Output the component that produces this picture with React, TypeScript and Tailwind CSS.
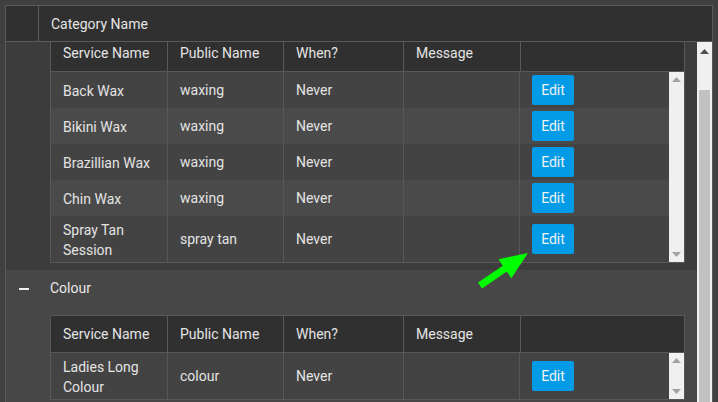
import React from "react";

type Row = { name: string[]; pub: string; when: string };

const Up = ({ color }: { color: string }) => (
  <svg width="9" height="5" viewBox="0 0 9 5"><polygon points="0,5 9,5 4.5,0" fill={color} /></svg>
);
const Down = ({ color }: { color: string }) => (
  <svg width="9" height="5" viewBox="0 0 9 5"><polygon points="0,0 9,0 4.5,5" fill={color} /></svg>
);

function Table({ rows }: { rows: Row[] }) {
  return (
    <div className="w-[635px] border border-[#585858] flex flex-col">
      <div className="flex h-[37px] bg-[#303030] border-b border-[#585858] text-[14px] text-[#e4e4e4]">
        <div className="w-[117px] shrink-0 border-r border-[#585858] px-3 pt-[1px] flex items-center">Service Name</div>
        <div className="w-[116px] shrink-0 border-r border-[#585858] px-3 pt-[1px] flex items-center">Public Name</div>
        <div className="w-[120px] shrink-0 border-r border-[#585858] px-3 pt-[1px] flex items-center">When?</div>
        <div className="w-[117px] shrink-0 border-r border-[#585858] px-3 pt-[1px] flex items-center">Message</div>
        <div className="flex-1" />
      </div>
      <div className="flex">
        <div className="flex-1 flex flex-col">
          {rows.map((r, i) => (
            <div
              key={i}
              className={`flex text-[14px] text-[#e4e4e4] ${r.name.length > 1 ? "h-[46px]" : "h-[36px]"} ${i % 2 === 0 ? "bg-[#434343]" : "bg-[#4a4a4a]"}`}
            >
              <div className="w-[117px] shrink-0 border-r border-[#585858] px-3 pt-[1px] flex flex-col justify-center leading-[20px]">
                {r.name.map((n, j) => (
                  <span key={j}>{n}</span>
                ))}
              </div>
              <div className="w-[116px] shrink-0 border-r border-[#585858] px-3 pt-[1px] flex items-center">{r.pub}</div>
              <div className="w-[120px] shrink-0 border-r border-[#585858] px-3 pt-[1px] flex items-center">{r.when}</div>
              <div className="w-[116px] shrink-0 border-r border-[#585858]" />
              <div className="flex-1 flex items-center pl-[12px]">
                <button className="w-[42px] h-[30px] bg-[#039be5] rounded-[2px] text-[14px] text-[#f2f2f2] pt-[1px] flex items-center justify-center">
                  Edit
                </button>
              </div>
            </div>
          ))}
        </div>
        <div className="w-[15px] bg-[#f0f0f0] flex flex-col items-center justify-between py-[5px]">
          <Up color="#a3a3a3" />
          <Down color="#a3a3a3" />
        </div>
      </div>
    </div>
  );
}

const waxRows: Row[] = [
  { name: ["Back Wax"], pub: "waxing", when: "Never" },
  { name: ["Bikini Wax"], pub: "waxing", when: "Never" },
  { name: ["Brazillian Wax"], pub: "waxing", when: "Never" },
  { name: ["Chin Wax"], pub: "waxing", when: "Never" },
  { name: ["Spray Tan", "Session"], pub: "spray tan", when: "Never" },
];

const colourRows: Row[] = [{ name: ["Ladies Long", "Colour"], pub: "colour", when: "Never" }];

export default function App() {
  return (
    <div
      className="relative w-[718px] h-[402px] overflow-hidden bg-[#404040]"
      style={{ fontFamily: "Roboto, 'Noto Sans', sans-serif" }}
    >
      <div className="ml-[5px] mt-[5px] w-[708px] h-[420px] border border-[#5a5a5a] flex flex-col">
        <div className="flex h-[36px] shrink-0 bg-[#303030] border-b border-[#5a5a5a] text-[14px] text-[#e4e4e4]">
          <div className="w-[33px] border-r border-[#5a5a5a]" />
          <div className="flex items-center pl-[12px] pt-[2px]">Category Name</div>
        </div>
        <div className="flex flex-1 overflow-hidden">
          <div className="w-[691px] flex flex-col overflow-hidden">
            <div className="flex bg-[#3c3c3c] -mt-[8px] pb-[7px] pl-[44px]">
              <Table rows={waxRows} />
            </div>
            <div className="bg-[#474747] flex flex-col pb-[20px]">
              <div className="h-[36px] flex items-center text-[14px] text-[#e8e8e8] pt-[1px]">
                <div className="w-[44px] flex justify-center pl-[1px]">
                  <div className="w-[10px] h-[2px] bg-[#f0f0f0] -translate-x-[5px]" />
                </div>
                <span>Colour</span>
              </div>
              <div className="pt-[9px] pl-[44px]">
                <Table rows={colourRows} />
              </div>
            </div>
          </div>
          <div className="w-[15px] bg-[#f0f0f0] flex flex-col items-center">
            <div className="h-[48px] w-full flex justify-center pt-[7px]">
              <Up color="#505050" />
            </div>
            <div className="w-[11px] flex-1 bg-[#c1c1c1]" />
          </div>
        </div>
      </div>
      <svg className="absolute left-0 top-0 pointer-events-none" width="718" height="402">
        <polygon
          points="528,253 511.3,278.2 506.8,271.6 482,288.4 478,282.6 502.8,265.8 498.4,259.2"
          fill="#00ff00"
        />
      </svg>
    </div>
  );
}
